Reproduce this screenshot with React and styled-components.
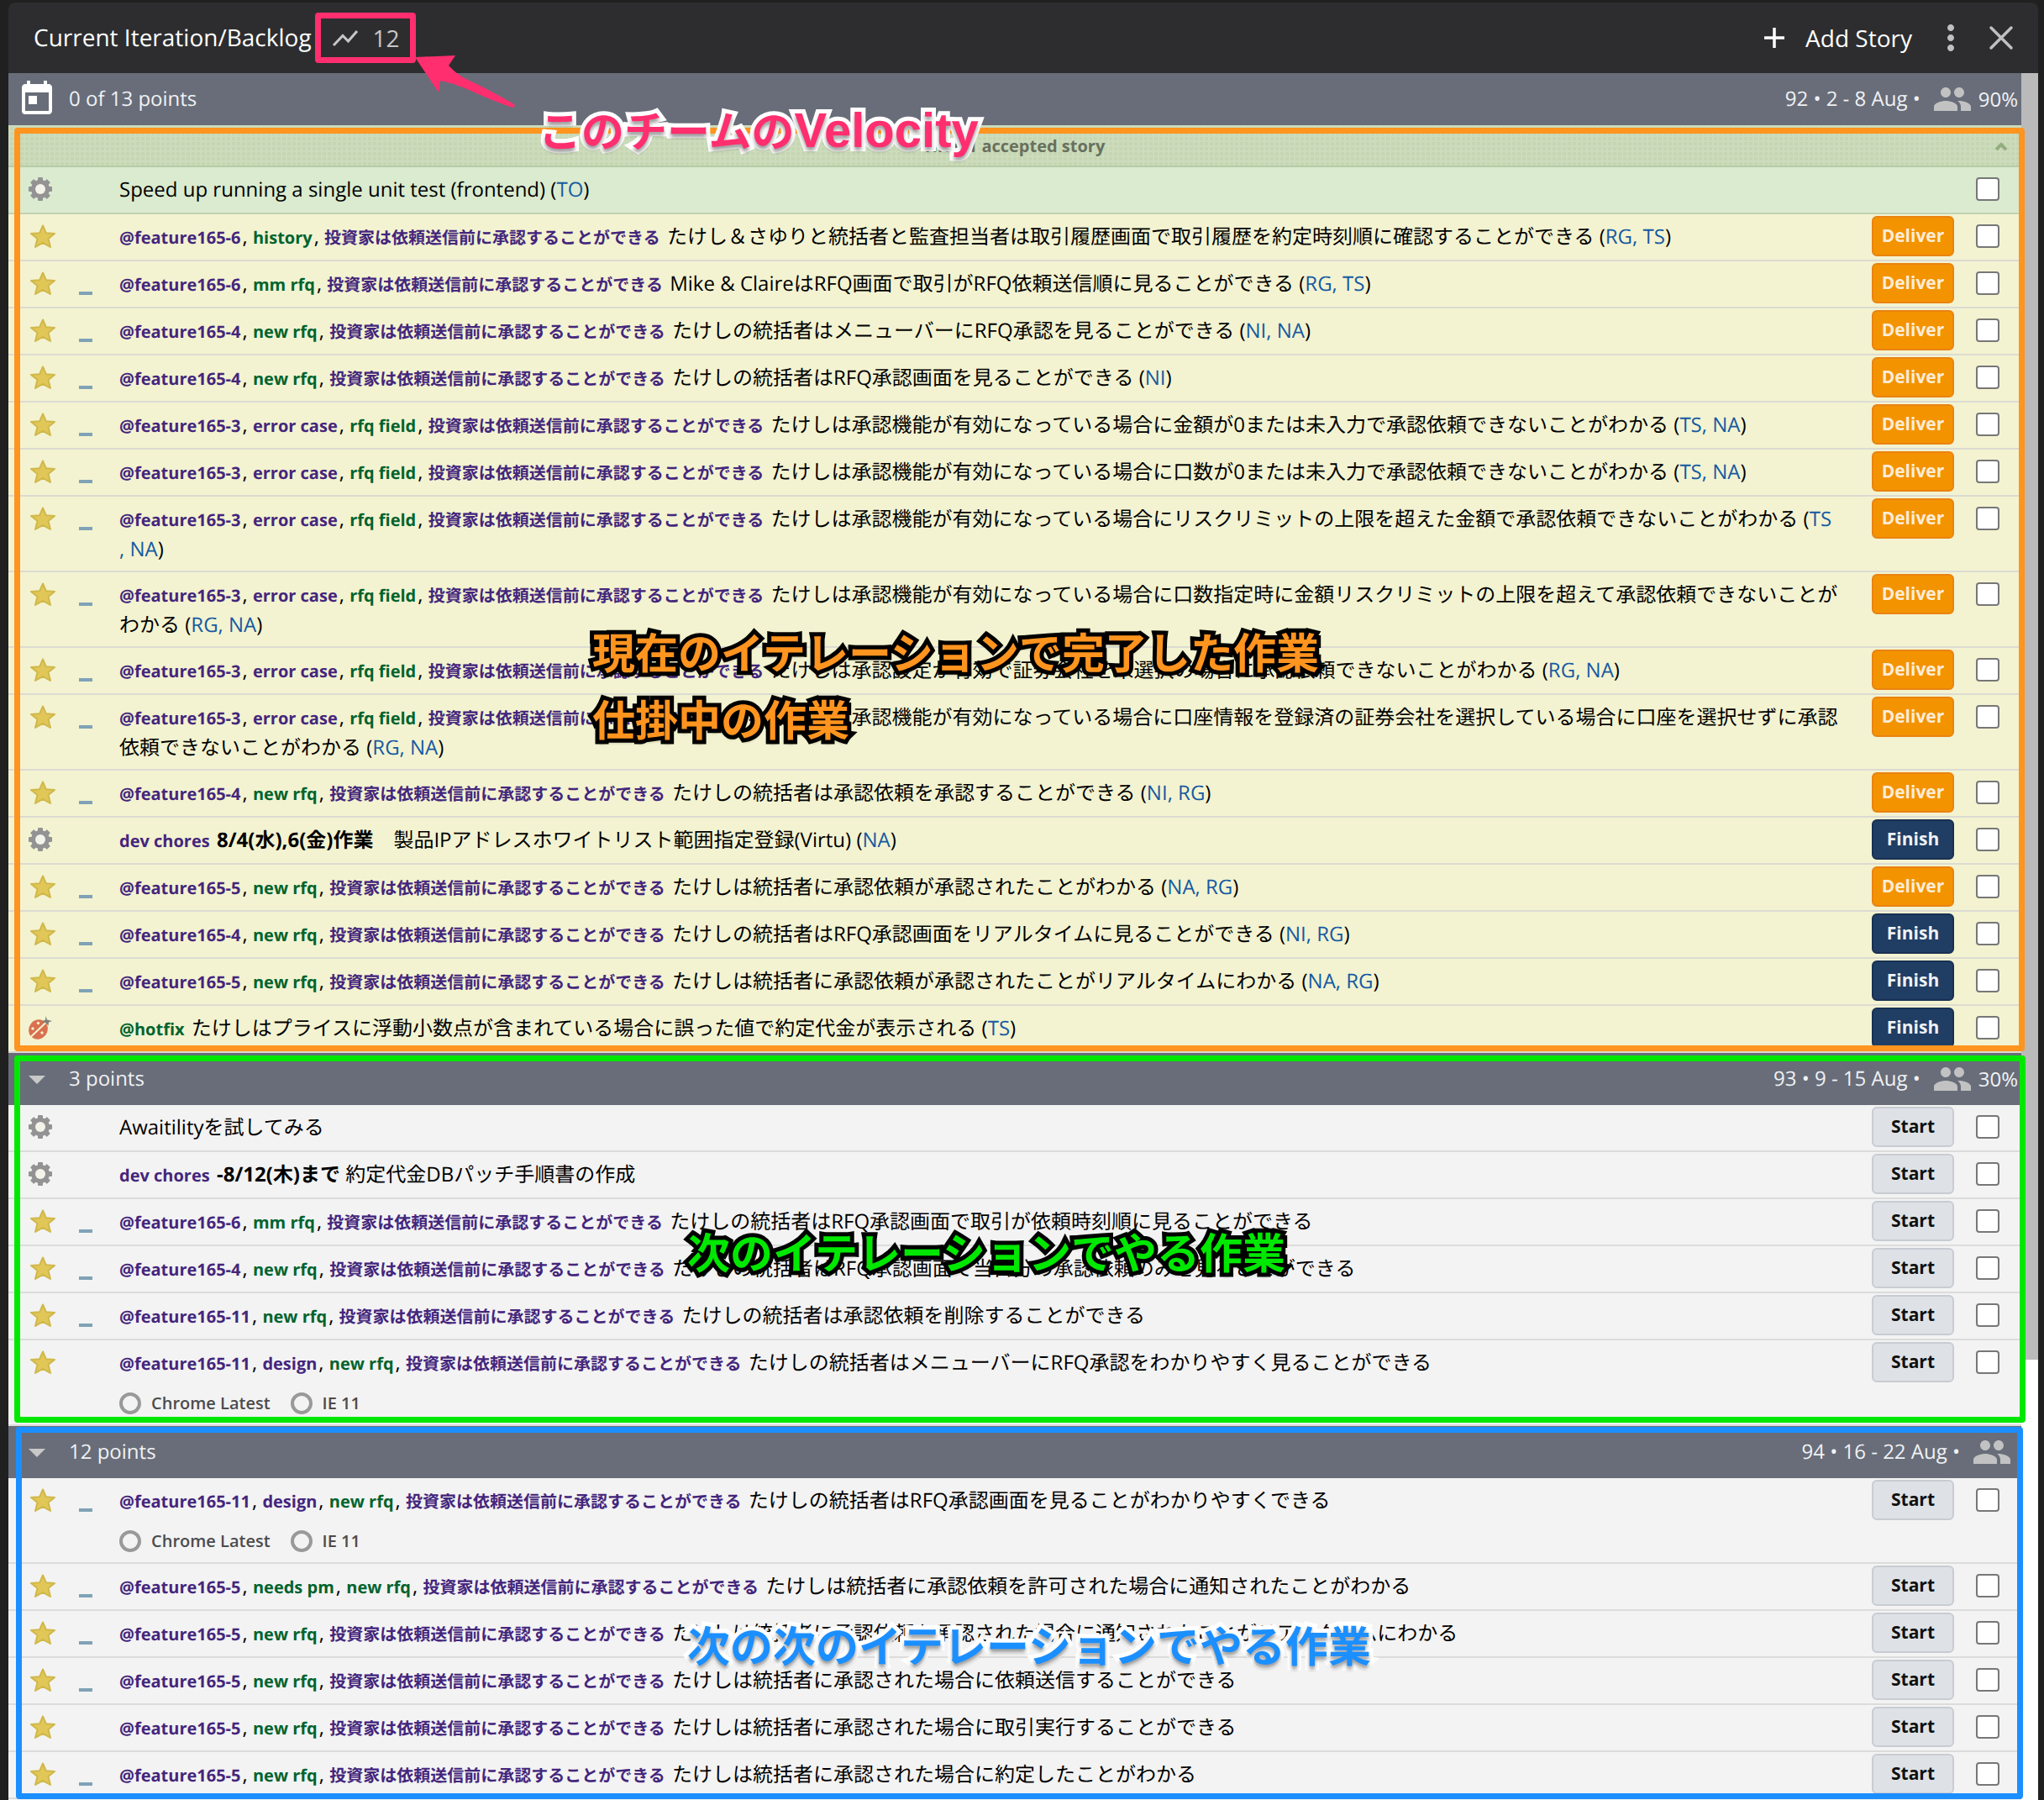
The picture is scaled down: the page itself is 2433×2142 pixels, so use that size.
import React from "react";
import styled, { createGlobalStyle, css } from "styled-components";
import { MdToday, MdPeople, MdMoreVert } from "react-icons/md";

const GlobalStyle = createGlobalStyle`
  *, *::before, *::after { box-sizing: border-box; }
  body {
    margin: 0;
    background: #202020;
    color: #000;
    font-family: "Open Sans", "Noto Sans CJK JP", sans-serif;
    font-size: 24px;
    line-height: 36px;
    text-rendering: geometricPrecision;
  }
  button { font: inherit; cursor: pointer; }
  svg { display: block; flex: none; }
`;

const Page = styled.div`
  padding: 3px 7px 0 10px;
  min-height: 100vh;
  display: flex;
`;

const Panel = styled.main`
  flex: 1;
  min-width: 0;
  display: flex;
  flex-direction: column;
  border-radius: 8px 8px 0 0;
  background: #2d2d2f;
`;

const PanelHeader = styled.header`
  height: 84px;
  padding: 0 20px 0 30px;
  display: flex;
  align-items: center;
  color: #fff;
  font-size: 28px;
`;

const PanelTitle = styled.h1`
  margin: 0;
  font-size: 28px;
  font-weight: 400;
`;

const PlainButton = styled.button`
  border: 0;
  padding: 0;
  background: none;
  color: inherit;
  display: flex;
  align-items: center;
`;

const Velocity = styled(PlainButton)`
  position: relative;
  z-index: 3;
  height: 60px;
  width: 120px;
  margin-left: 4px;
  padding-left: 20px;
  gap: 17px;
  color: #c6c6c6;
`;

const HeaderActions = styled.div`
  margin-left: auto;
  display: flex;
  align-items: center;
  gap: 12px;
  color: #c0c0c0;
`;

const AddStory = styled(PlainButton)`
  gap: 25px;
  margin-right: 10px;
  color: #fff;
`;

const Body = styled.div`
  flex: 1;
  display: flex;
`;

const Iterations = styled.div`
  flex: 1;
  min-width: 0;
  background: #f3f3f3;
`;

const ScrollTrack = styled.div`
  width: 20px;
  background: #fff;
`;

const ScrollThumb = styled.div`
  height: 74.5%;
  background: #bababa;
`;

const Iteration = styled.section`
  position: relative;
`;

const IterationBar = styled.div`
  height: 62px;
  padding: 0 4px 0 10px;
  display: flex;
  align-items: center;
  background: #686d79;
  color: #f0f1f4;
`;

const BarToggle = styled(PlainButton)`
  width: 48px;
  height: 48px;
  color: ${(p) => (p.$bright ? "#fff" : "#c8c8c8")};
`;

const Points = styled.span`
  padding-left: 14px;
`;

const BarInfo = styled.div`
  margin-left: auto;
  display: flex;
  align-items: center;
`;

const TeamStrength = styled(PlainButton)`
  margin-left: 14px;
  gap: 7px;

  svg { color: #c2c2c2; }
`;

const Zone = styled.div`
  position: relative;
`;

const AcceptedToggle = styled.button`
  width: 100%;
  height: 50px;
  padding: 2px 17px 0;
  border: 0;
  border-bottom: 2px solid #b9cba8;
  display: grid;
  grid-template-columns: 1fr auto 1fr;
  align-items: center;
  background:
    linear-gradient(90deg, #cddcbc 2px, transparent 2px) 0 0 / 6px 6px,
    linear-gradient(#cddcbc 2px, transparent 2px) 0 0 / 6px 6px,
    #c5d6b3;
  color: #68705f;
  font-size: 20px;
  font-weight: 700;

  span { grid-column: 2; }
  svg { justify-self: end; }
`;

const StoryList = styled.ul`
  margin: 0;
  padding: 0;
  list-style: none;
`;

const tones = {
  accepted: css`background: #daebcf; border-color: #c2d2b4;`,
  active: css`background: #f3f3d1; border-color: #dcdbd2;`,
  planned: css`background: #f3f3f3; border-color: #dcdcdc;`,
};

const StoryItem = styled.li`
  min-height: 56px;
  padding: 0 26px 0 24px;
  display: flex;
  align-items: flex-start;
  border-bottom: 2px solid;
  ${(p) => tones[p.$tone]}
`;

const TypeSlot = styled.div`
  width: 32px;
  padding-top: 12px;
`;

const Estimate = styled.div`
  width: 16px;
  height: 4px;
  margin: 36px 32px 0 28px;
  background: ${(p) => (p.$shown ? "#7fa2b6" : "transparent")};
`;

const StoryText = styled.div`
  flex: 1;
  min-width: 0;
  padding: 9px 0 7px;
`;

const Title = styled.div`
  overflow-wrap: anywhere;

  a, span, strong { line-height: 24px; }
`;

const Label = styled.a`
  padding-right: 2px;
  color: ${(p) => (p.$green ? "#00632e" : "#44267c")};
  font-size: 20px;
  font-weight: 700;
  text-decoration: none;
`;

const Owner = styled.a`
  color: #155aa2;
  text-decoration: none;
`;

const OwnerTail = styled.span`
  color: #155aa2;
  white-space: nowrap;
`;

const Reviews = styled.div`
  display: flex;
  gap: 24px;
  padding: 17px 0 5px;
`;

const Review = styled(PlainButton)`
  gap: 12px;
  height: 26px;
  color: #4c4c4c;
  font-size: 20px;
  font-weight: 600;
`;

const ReviewMark = styled.span`
  width: 26px;
  height: 26px;
  border: 4px solid #999;
  border-radius: 50%;
`;

const StoryActions = styled.div`
  display: flex;
  align-items: flex-start;
  gap: 26px;
  padding: 2px 0 4px 26px;
`;

const buttonTones = {
  Deliver: css`background: #f39300; border-color: #ea8311; color: #fdecd6;`,
  Finish: css`background: #203e64; border-color: #183052; color: #f0f2f6;`,
  Start: css`background: #dee2e6; border-color: #c8ccd3; color: #101010;`,
};

const StateButton = styled.button`
  width: 98px;
  height: 48px;
  padding: 0 0 2px;
  border: 2px solid;
  border-radius: 6px;
  font-size: 21px;
  font-weight: 700;
  line-height: 32px;
  ${(p) => buttonTones[p.$state]}
`;

const Select = styled.input`
  appearance: none;
  width: 28px;
  height: 28px;
  margin: 10px 0 0;
  border: 2px solid #777;
  border-radius: 4px;
  background: #fff;
`;

const Frame = styled.div`
  position: absolute;
  inset: ${(p) => p.$inset};
  border: 7px solid ${(p) => p.$color};
  border-radius: 4px;
  pointer-events: none;
`;

const Note = styled.div`
  position: absolute;
  z-index: 2;
  left: ${(p) => p.$left}px;
  top: ${(p) => p.$top}px;
  color: ${(p) => p.$color};
  font-family: "Liberation Sans", "Noto Sans CJK JP", sans-serif;
  font-size: 51px;
  font-weight: 700;
  line-height: 80px;
  white-space: pre;
  -webkit-text-stroke: 10px ${(p) => p.$edge};
  paint-order: stroke fill;
  text-shadow: 0 4px 4px rgba(0, 0, 0, 0.4);
  pointer-events: none;
`;

const NoteLatin = styled.span`
  font-size: 58px;
`;

const ArrowShape = styled.svg`
  position: absolute;
  left: 118px;
  top: 48px;
`;

const TrendIcon = () => (
  <svg width="32" height="32" viewBox="0 0 32 32" fill="none" stroke="currentColor" strokeWidth="3">
    <path d="M2 25 L13 13.500 L19.500 20 L30 8" />
  </svg>
);

const PlusIcon = () => (
  <svg width="24" height="24" viewBox="0 0 24 24" stroke="currentColor" strokeWidth="3.500">
    <path d="M12 0V24M0 12H24" />
  </svg>
);

const CloseIcon = () => (
  <svg width="48" height="48" viewBox="0 0 48 48" stroke="currentColor" strokeWidth="3.500" strokeLinecap="round">
    <path d="M12 12L36 36M36 12L12 36" />
  </svg>
);

const CaretIcon = () => (
  <svg width="48" height="48" viewBox="0 0 48 48" fill="currentColor">
    <path d="M14 20H34L24 30Z" />
  </svg>
);

const ChevronIcon = () => (
  <svg width="14" height="12" viewBox="0 0 14 12" fill="none" stroke="#93ad7f" strokeWidth="4">
    <path d="M1 10L7 4L13 10" />
  </svg>
);

const StarIcon = () => (
  <svg width="32" height="28" viewBox="0 0 32 28">
    <path
      d="M17 1.500L20.800 10.200L31 10.900L23.500 17L26 27L17 21.800L8 27L10.500 17L3 10.900L13.200 10.200Z"
      fill="#e1c758"
      stroke="#d0b84a"
      strokeWidth="2"
      strokeLinejoin="round"
    />
  </svg>
);

const GearIcon = () => (
  <svg width="28" height="28" viewBox="0 0 28 28">
    <g fill="#939393">
      {[0, 45, 90, 135].map((angle) => (
        <rect key={angle} x="11" y="0" width="6" height="28" rx="1" transform={`rotate(${angle} 14 14)`} />
      ))}
    </g>
    <circle cx="14" cy="14" r="8" fill="none" stroke="#939393" strokeWidth="6" />
    <circle cx="14" cy="14" r="6" fill="#f3f3ea" />
  </svg>
);

const BugIcon = () => (
  <svg width="28" height="28" viewBox="0 0 28 28">
    <ellipse cx="11.500" cy="16" rx="11" ry="12" transform="rotate(35 11.500 16)" fill="#d9704f" />
    <path d="M2.500 25L21 7.500" stroke="#f3f3d1" strokeWidth="2" />
    <path d="M20.500 0L22 4.500L28 6L24 7.500L23.500 11.500L20 8L16 6.500L20 4.500Z" fill="#7d8279" />
    <g fill="#f3f3d1">
      <circle cx="11.500" cy="8.500" r="1.700" />
      <circle cx="5" cy="15" r="1.700" />
      <circle cx="16" cy="20" r="1.700" />
    </g>
  </svg>
);

const icons = { feature: StarIcon, chore: GearIcon, bug: BugIcon };

const EPIC = "投資家は依頼送信前に承認することができる";
const GREEN = ["history", "mm rfq", "new rfq", "rfq field", "needs pm", "@hotfix"];

const accepted = [
  { type: "chore", title: "Speed up running a single unit test (frontend)", owners: ["TO"] },
];

const current = [
  { labels: ["@feature165-6", "history", EPIC], title: "たけし＆さゆりと統括者と監査担当者は取引履歴画面で取引履歴を約定時刻順に確認することができる", owners: ["RG", "TS"], state: "Deliver", unestimated: true },
  { labels: ["@feature165-6", "mm rfq", EPIC], title: "Mike & ClaireはRFQ画面で取引がRFQ依頼送信順に見ることができる", owners: ["RG", "TS"], state: "Deliver" },
  { labels: ["@feature165-4", "new rfq", EPIC], title: "たけしの統括者はメニューバーにRFQ承認を見ることができる", owners: ["NI", "NA"], state: "Deliver" },
  { labels: ["@feature165-4", "new rfq", EPIC], title: "たけしの統括者はRFQ承認画面を見ることができる", owners: ["NI"], state: "Deliver" },
  { labels: ["@feature165-3", "error case", "rfq field", EPIC], title: "たけしは承認機能が有効になっている場合に金額が0または未入力で承認依頼できないことがわかる", owners: ["TS", "NA"], state: "Deliver" },
  { labels: ["@feature165-3", "error case", "rfq field", EPIC], title: "たけしは承認機能が有効になっている場合に口数が0または未入力で承認依頼できないことがわかる", owners: ["TS", "NA"], state: "Deliver" },
  { labels: ["@feature165-3", "error case", "rfq field", EPIC], title: "たけしは承認機能が有効になっている場合にリスクリミットの上限を超えた金額で承認依頼できないことがわかる", owners: ["TS", "NA"], state: "Deliver" },
  { labels: ["@feature165-3", "error case", "rfq field", EPIC], title: "たけしは承認機能が有効になっている場合に口数指定時に金額リスクリミットの上限を超えて承認依頼できないことがわかる", owners: ["RG", "NA"], state: "Deliver" },
  { labels: ["@feature165-3", "error case", "rfq field", EPIC], title: "たけしは承認設定が有効で証券会社を未選択の場合に承認依頼できないことがわかる", owners: ["RG", "NA"], state: "Deliver" },
  { labels: ["@feature165-3", "error case", "rfq field", EPIC], title: "たけしは承認機能が有効になっている場合に口座情報を登録済の証券会社を選択している場合に口座を選択せずに承認依頼できないことがわかる", owners: ["RG", "NA"], state: "Deliver" },
  { labels: ["@feature165-4", "new rfq", EPIC], title: "たけしの統括者は承認依頼を承認することができる", owners: ["NI", "RG"], state: "Deliver" },
  { type: "chore", labels: ["dev chores"], strong: "8/4(水),6(金)作業", title: "　製品IPアドレスホワイトリスト範囲指定登録(Virtu)", owners: ["NA"], state: "Finish" },
  { labels: ["@feature165-5", "new rfq", EPIC], title: "たけしは統括者に承認依頼が承認されたことがわかる", owners: ["NA", "RG"], state: "Deliver" },
  { labels: ["@feature165-4", "new rfq", EPIC], title: "たけしの統括者はRFQ承認画面をリアルタイムに見ることができる", owners: ["NI", "RG"], state: "Finish" },
  { labels: ["@feature165-5", "new rfq", EPIC], title: "たけしは統括者に承認依頼が承認されたことがリアルタイムにわかる", owners: ["NA", "RG"], state: "Finish" },
  { type: "bug", labels: ["@hotfix"], title: "たけしはプライスに浮動小数点が含まれている場合に誤った値で約定代金が表示される", owners: ["TS"], state: "Finish" },
];

const next = [
  { type: "chore", title: "Awaitilityを試してみる", state: "Start" },
  { type: "chore", labels: ["dev chores"], strong: "-8/12(木)まで", title: " 約定代金DBパッチ手順書の作成", state: "Start" },
  { labels: ["@feature165-6", "mm rfq", EPIC], title: "たけしの統括者はRFQ承認画面で取引が依頼時刻順に見ることができる", state: "Start" },
  { labels: ["@feature165-4", "new rfq", EPIC], title: "たけしの統括者はRFQ承認画面で当日分の承認依頼のみを見ることができる", state: "Start" },
  { labels: ["@feature165-11", "new rfq", EPIC], title: "たけしの統括者は承認依頼を削除することができる", state: "Start" },
  { labels: ["@feature165-11", "design", "new rfq", EPIC], title: "たけしの統括者はメニューバーにRFQ承認をわかりやすく見ることができる", state: "Start", reviews: ["Chrome Latest", "IE 11"], unestimated: true },
];

const later = [
  { labels: ["@feature165-11", "design", "new rfq", EPIC], title: "たけしの統括者はRFQ承認画面を見ることがわかりやすくできる", state: "Start", reviews: ["Chrome Latest", "IE 11"] },
  { labels: ["@feature165-5", "needs pm", "new rfq", EPIC], title: "たけしは統括者に承認依頼を許可された場合に通知されたことがわかる", state: "Start" },
  { labels: ["@feature165-5", "new rfq", EPIC], title: "たけしは統括者に承認依頼を承認された場合に通知されたことがリアルタイムにわかる", state: "Start" },
  { labels: ["@feature165-5", "new rfq", EPIC], title: "たけしは統括者に承認された場合に依頼送信することができる", state: "Start" },
  { labels: ["@feature165-5", "new rfq", EPIC], title: "たけしは統括者に承認された場合に取引実行することができる", state: "Start", unestimated: true },
  { labels: ["@feature165-5", "new rfq", EPIC], title: "たけしは統括者に承認された場合に約定したことがわかる", state: "Start" },
];

function Owners({ names }) {
  return (
    <>
      {" ("}
      {names.map((name, i) =>
        i === 0 ? (
          <Owner key={name} href="#">{name}</Owner>
        ) : (
          <React.Fragment key={name}>
            <wbr />
            <OwnerTail>, <Owner href="#">{name}</Owner></OwnerTail>
          </React.Fragment>
        )
      )}
      {")"}
    </>
  );
}

function Story({ story, tone }) {
  const { type = "feature", labels = [], strong, title, owners, state, reviews, unestimated } = story;
  const Icon = icons[type];
  return (
    <StoryItem $tone={tone}>
      <TypeSlot><Icon /></TypeSlot>
      <Estimate $shown={type === "feature" && !unestimated} />
      <StoryText>
        <Title>
          {labels.map((label, i) => (
            <React.Fragment key={label}>
              <Label href="#" $green={GREEN.includes(label)}>{label}</Label>
              {i < labels.length - 1 ? ", " : " "}
            </React.Fragment>
          ))}
          {strong && <strong>{strong}</strong>}
          {title}
          {owners && <Owners names={owners} />}
        </Title>
        {reviews && (
          <Reviews>
            {reviews.map((name) => (
              <Review key={name} type="button"><ReviewMark />{name}</Review>
            ))}
          </Reviews>
        )}
      </StoryText>
      <StoryActions>
        {state && <StateButton type="button" $state={state}>{state}</StateButton>}
        <Select type="checkbox" aria-label={title.trim()} />
      </StoryActions>
    </StoryItem>
  );
}

function Stories({ items, tone }) {
  return (
    <StoryList>
      {items.map((story, i) => <Story key={i} story={story} tone={tone} />)}
    </StoryList>
  );
}

function Bar({ icon, bright, points, dates, strength }) {
  return (
    <IterationBar>
      <BarToggle type="button" aria-label="Toggle iteration" $bright={bright}>{icon}</BarToggle>
      <Points>{points}</Points>
      <BarInfo>
        <span>{dates}</span>
        <TeamStrength type="button" aria-label="Team strength">
          <MdPeople size={48} />
          <span>{strength}</span>
        </TeamStrength>
      </BarInfo>
    </IterationBar>
  );
}

export default function App() {
  return (
    <>
      <GlobalStyle />
      <Page lang="ja">
        <Panel>
          <PanelHeader>
            <PanelTitle>Current Iteration/Backlog</PanelTitle>
            <Velocity type="button">
              <TrendIcon />
              12
              <Frame $inset="0" $color="#ff2e6f" />
              <ArrowShape width="122" height="68" viewBox="0 0 122 68" fill="#ff2e6f">
                <path d="M1 5L49 3L41 15Q52 27 66 33Q88 43 119 61Q121 65 117 65Q86 54 63 43Q43 35 31 33L29 47Z" />
              </ArrowShape>
            </Velocity>
            <HeaderActions>
              <AddStory type="button"><PlusIcon />Add Story</AddStory>
              <PlainButton type="button" aria-label="More"><MdMoreVert size={48} /></PlainButton>
              <PlainButton type="button" aria-label="Close"><CloseIcon /></PlainButton>
            </HeaderActions>
          </PanelHeader>
          <Body>
            <Iterations>
              <Iteration>
                <Bar icon={<MdToday size={48} />} bright points="0 of 13 points" dates="92 • 2 - 8 Aug •" strength="90%" />
                <Zone>
                  <AcceptedToggle type="button"><span>Hide 1 accepted story</span><ChevronIcon /></AcceptedToggle>
                  <Stories items={accepted} tone="accepted" />
                  <Stories items={current} tone="active" />
                  <Frame $inset="3px -4px 2px 7px" $color="#ff941f" />
                  <Note $left={631} $top={-33} $color="#ff2e6f" $edge="#fff">
                    このチームの<NoteLatin>Velocity</NoteLatin>
                  </Note>
                  <Note $left={695} $top={590} $color="#ff941f" $edge="#000">{"現在のイテレーションで完了した作業\n仕掛中の作業"}</Note>
                </Zone>
              </Iteration>
              <Iteration>
                <Bar icon={<CaretIcon />} points="3 points" dates="93 • 9 - 15 Aug •" strength="30%" />
                <Stories items={next} tone="planned" />
                <Frame $inset="3px -5px 4px 7px" $color="#00e800" />
                <Note $left={808} $top={200} $color="#00e800" $edge="#000">次のイテレーションでやる作業</Note>
              </Iteration>
              <Iteration>
                <Bar icon={<CaretIcon />} points="12 points" dates="94 • 16 - 22 Aug •" />
                <Stories items={later} tone="planned" />
                <Frame $inset="1px -2px 0 9px" $color="#1b8fff" />
                <Note $left={808} $top={224} $color="#1b8fff" $edge="#fff">次の次のイテレーションでやる作業</Note>
              </Iteration>
            </Iterations>
            <ScrollTrack><ScrollThumb /></ScrollTrack>
          </Body>
        </Panel>
      </Page>
    </>
  );
}
